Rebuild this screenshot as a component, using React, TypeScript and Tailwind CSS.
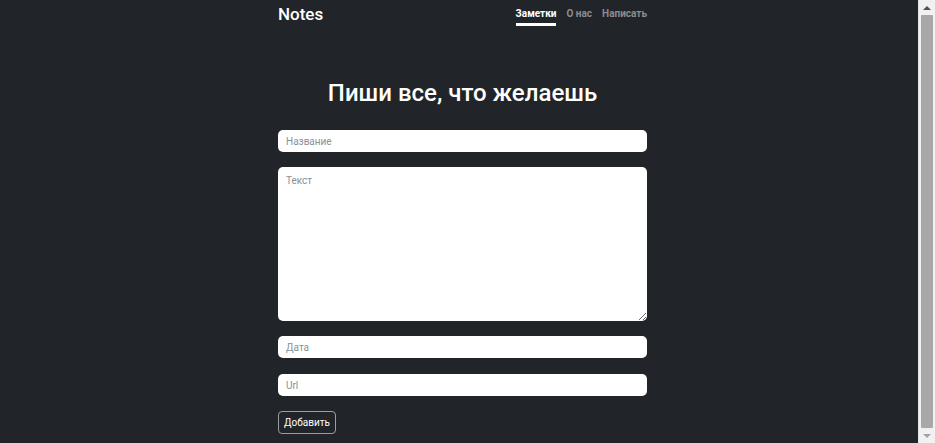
const font = { fontFamily: 'Roboto, "Noto Sans", sans-serif' };

function Field({ placeholder, className = "" }: { placeholder: string; className?: string }) {
  return (
    <input
      type="text"
      placeholder={placeholder}
      className={`block h-[22px] w-full rounded-[5px] bg-white px-2 text-[10px] text-gray-800 outline-none placeholder:text-[#8a8f95] ${className}`}
    />
  );
}

function Scrollbar() {
  return (
    <div className="flex w-[17px] shrink-0 flex-col border-l border-[#e6e6e6] bg-[#f1f1f1]">
      <div className="flex h-[15px] items-center justify-center">
        <div className="h-0 w-0 border-x-[4px] border-b-[4px] border-x-transparent border-b-[#505050]" />
      </div>
      <div className="mx-[2px] flex-1 rounded-[1px] bg-[#a8a8a8]" />
      <div className="flex h-[15px] items-center justify-center">
        <div className="h-0 w-0 border-x-[4px] border-t-[4px] border-x-transparent border-t-[#a3a3a3]" />
      </div>
    </div>
  );
}

export default function App() {
  return (
    <div className="flex h-[443px] overflow-hidden bg-[#212529] text-white" style={font}>
      <div className="flex-1">
        <div className="ml-[278px] w-[369px]">
          <header className="flex h-[27px] items-start justify-between">
            <a className="pt-[3px] text-[17px] leading-[22px] font-medium">Notes</a>
            <nav className="flex gap-[10px] pt-[7px] text-[10px] leading-[13px] font-bold">
              <a className="border-b-[3px] border-white pb-[3px] text-white">Заметки</a>
              <a className="text-[#8a8d91]">О нас</a>
              <a className="text-[#8a8d91]">Написать</a>
            </nav>
          </header>

          <h1 className="mt-[48px] text-center text-[24px] leading-[36px] font-medium">
            Пиши все, что желаешь
          </h1>

          <form className="mt-[19px] flex flex-col items-start gap-[15px]">
            <Field placeholder="Название" />
            <textarea
              placeholder="Текст"
              className="block h-[154px] w-full rounded-[5px] bg-white px-2 py-[6px] text-[10px] text-gray-800 outline-none placeholder:text-[#8a8f95]"
            />
            <Field placeholder="Дата" />
            <Field placeholder="Url" className="mt-px" />
            <button
              type="button"
              className="block h-[23px] w-[58px] rounded-[4px] border border-[#9a9ea3] text-[10px] leading-none text-white"
            >
              Добавить
            </button>
          </form>
        </div>
      </div>
      <Scrollbar />
    </div>
  );
}
